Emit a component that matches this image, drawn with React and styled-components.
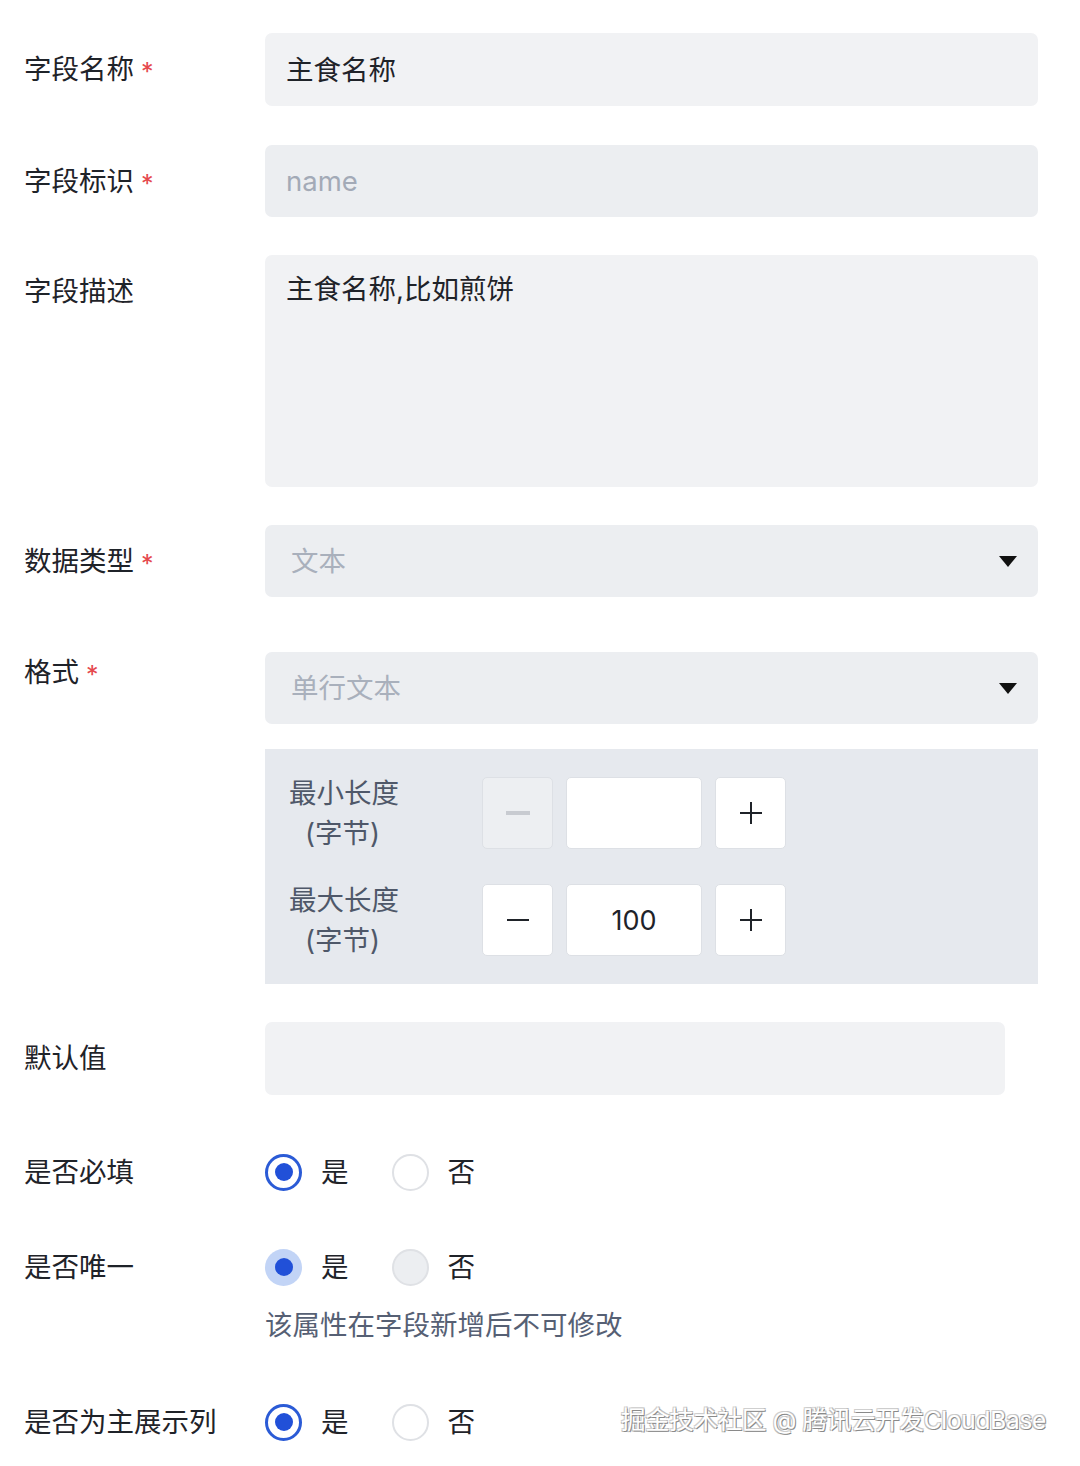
import React from "react";
import styled, { createGlobalStyle } from "styled-components";

const Global = createGlobalStyle`
  html, body { margin: 0; padding: 0; background: #fff; }
  body { font-family: Inter, "Noto Sans CJK SC", sans-serif; color: #1f2329; }
  * { box-sizing: border-box; }
`;

const Page = styled.div`
  position: relative;
  width: 1080px;
  height: 1466px;
  padding: 33px 42px 0 24px;
  overflow: hidden;
`;

const Row = styled.div`
  display: grid;
  grid-template-columns: 241px 1fr;
  align-items: ${(p) => (p.$center ? "center" : "start")};
  margin-bottom: ${(p) => p.$mb || 0}px;
`;

const Label = styled.div`
  font-size: 27.5px;
  height: ${(p) => p.$lh || 73}px;
  line-height: ${(p) => p.$lh || 73}px;
  color: #1f2329;
  white-space: nowrap;
  display: flex;
  align-items: center;
`;

const Star = styled.span`
  color: #e5484d;
  font-size: 25px;
  line-height: 1;
  margin-left: 7px;
  transform: translateY(3px);
`;

const Field = styled.div`
  height: ${(p) => p.$h || 73}px;
  width: ${(p) => (p.$w ? `${p.$w}px` : "100%")};
  background: ${(p) => (p.$disabled ? "#eceef1" : "#f1f2f4")};
  border-radius: 7px;
  display: flex;
  align-items: ${(p) => (p.$top ? "flex-start" : "center")};
  padding: ${(p) => (p.$top ? "20px 21px" : "0 21px")};
  font-size: 27.5px;
  line-height: 28px;
  color: ${(p) => (p.$muted ? "#a3aab7" : "#1f2329")};
`;

const Select = styled(Field)`
  justify-content: space-between;
  padding: 0 21px 0 26px;
  color: #a9b0bc;
`;

const Caret = () => (
  <svg width="18" height="11" viewBox="0 0 18 11">
    <path d="M0 0 H18 L9 11 Z" fill="#111" />
  </svg>
);

const Stack = styled.div`
  display: flex;
  flex-direction: column;
  gap: 25px;
`;

const Panel = styled.div`
  background: #e6e9ee;
  padding: 24px 24px 24px;
  display: flex;
  flex-direction: column;
  gap: 27px;
`;

const StepRow = styled.div`
  display: grid;
  grid-template-columns: 193px auto;
  align-items: center;
`;

const StepLabel = styled.div`
  font-size: 27.5px;
  line-height: 40px;
  color: #4f5869;
  & > span {
    display: block;
    padding-left: 16px;
  }
`;

const Stepper = styled.div`
  display: flex;
  gap: 13px;
`;

const StepBtn = styled.div`
  width: 71px;
  height: 72px;
  border-radius: 5px;
  border: 1px solid #dde0e5;
  background: ${(p) => (p.$disabled ? "#edeff2" : "#fff")};
  position: relative;
  display: flex;
  align-items: center;
  justify-content: center;
`;

const Bar = styled.span`
  position: absolute;
  width: ${(p) => (p.$disabled ? 24 : 22)}px;
  height: ${(p) => (p.$disabled ? 4 : 2)}px;
  background: ${(p) => (p.$disabled ? "#c8cbd1" : "#1f2329")};
  transform: rotate(${(p) => (p.$v ? 90 : 0)}deg);
`;

const StepInput = styled.div`
  width: 136px;
  height: 72px;
  border-radius: 5px;
  border: 1px solid #dde0e5;
  background: #fff;
  display: flex;
  align-items: center;
  justify-content: center;
  font-size: 27px;
  color: #1f2329;
`;

const RadioGroup = styled.div`
  display: flex;
  align-items: center;
  height: 50px;
`;

const RadioItem = styled.div`
  display: flex;
  align-items: center;
  gap: 19px;
  margin-right: 43px;
  font-size: 27.5px;
  line-height: 37px;
  color: #1f2329;
`;

const Circle = styled.span`
  width: 37px;
  height: 37px;
  border-radius: 50%;
  display: flex;
  align-items: center;
  justify-content: center;
  border: ${(p) =>
    p.$checked
      ? p.$disabled
        ? "none"
        : "3px solid #2b5bd6"
      : "2px solid #dfe1e5"};
  background: ${(p) =>
    p.$checked && p.$disabled ? "#c2d4f6" : p.$disabled ? "#eceef1" : "#fff"};
  &::after {
    content: "";
    display: ${(p) => (p.$checked ? "block" : "none")};
    width: 18px;
    height: 18px;
    border-radius: 50%;
    background: #2150d8;
  }
`;

const Help = styled.div`
  font-size: 27.5px;
  line-height: 40px;
  color: #566074;
  margin-top: 13px;
`;

const Watermark = styled.div`
  position: absolute;
  right: 34px;
  top: 1402px;
  font-size: 24.5px;
  line-height: 36px;
  color: #fff;
  letter-spacing: -0.3px;
  text-shadow: 1px 1px 0 #8a8a8a, -1px -1px 0 #cfcfcf, 1px -1px 0 #bdbdbd, -1px 1px 0 #bdbdbd;
  white-space: nowrap;
`;

const Radios = ({ disabled }) => (
  <RadioGroup>
    <RadioItem>
      <Circle $checked $disabled={disabled} />
      是
    </RadioItem>
    <RadioItem>
      <Circle $disabled={disabled} />
      否
    </RadioItem>
  </RadioGroup>
);

const Step = ({ label, value, minusDisabled }) => (
  <StepRow>
    <StepLabel>
      {label}
      <span>(字节)</span>
    </StepLabel>
    <Stepper>
      <StepBtn $disabled={minusDisabled}>
        <Bar $disabled={minusDisabled} />
      </StepBtn>
      <StepInput>{value}</StepInput>
      <StepBtn>
        <Bar />
        <Bar $v />
      </StepBtn>
    </Stepper>
  </StepRow>
);

export default function App() {
  return (
    <Page>
      <Global />
      <Row $mb={39}>
        <Label>
          字段名称<Star>*</Star>
        </Label>
        <Field>主食名称</Field>
      </Row>
      <Row $mb={38}>
        <Label $lh={72}>
          字段标识<Star>*</Star>
        </Label>
        <Field $h={72} $disabled $muted>
          name
        </Field>
      </Row>
      <Row $mb={38}>
        <Label $lh={72}>字段描述</Label>
        <Field $h={232} $top>
          主食名称,比如煎饼
        </Field>
      </Row>
      <Row $mb={55}>
        <Label $lh={72}>
          数据类型<Star>*</Star>
        </Label>
        <Select $h={72} $disabled>
          文本
          <Caret />
        </Select>
      </Row>
      <Row $mb={38}>
        <Label $lh={40}>
          格式<Star>*</Star>
        </Label>
        <Stack>
          <Select $h={72} $disabled>
            单行文本
            <Caret />
          </Select>
          <Panel>
            <Step label="最小长度" value="" minusDisabled />
            <Step label="最大长度" value="100" />
          </Panel>
        </Stack>
      </Row>
      <Row $mb={52}>
        <Label>默认值</Label>
        <Field $w={740} />
      </Row>
      <Row $mb={45} $center>
        <Label $lh={50}>是否必填</Label>
        <Radios />
      </Row>
      <Row $mb={52}>
        <Label $lh={50}>是否唯一</Label>
        <div>
          <Radios disabled />
          <Help>该属性在字段新增后不可修改</Help>
        </div>
      </Row>
      <Row $center>
        <Label $lh={50}>是否为主展示列</Label>
        <Radios />
      </Row>
      <Watermark>掘金技术社区 @ 腾讯云开发CloudBase</Watermark>
    </Page>
  );
}
